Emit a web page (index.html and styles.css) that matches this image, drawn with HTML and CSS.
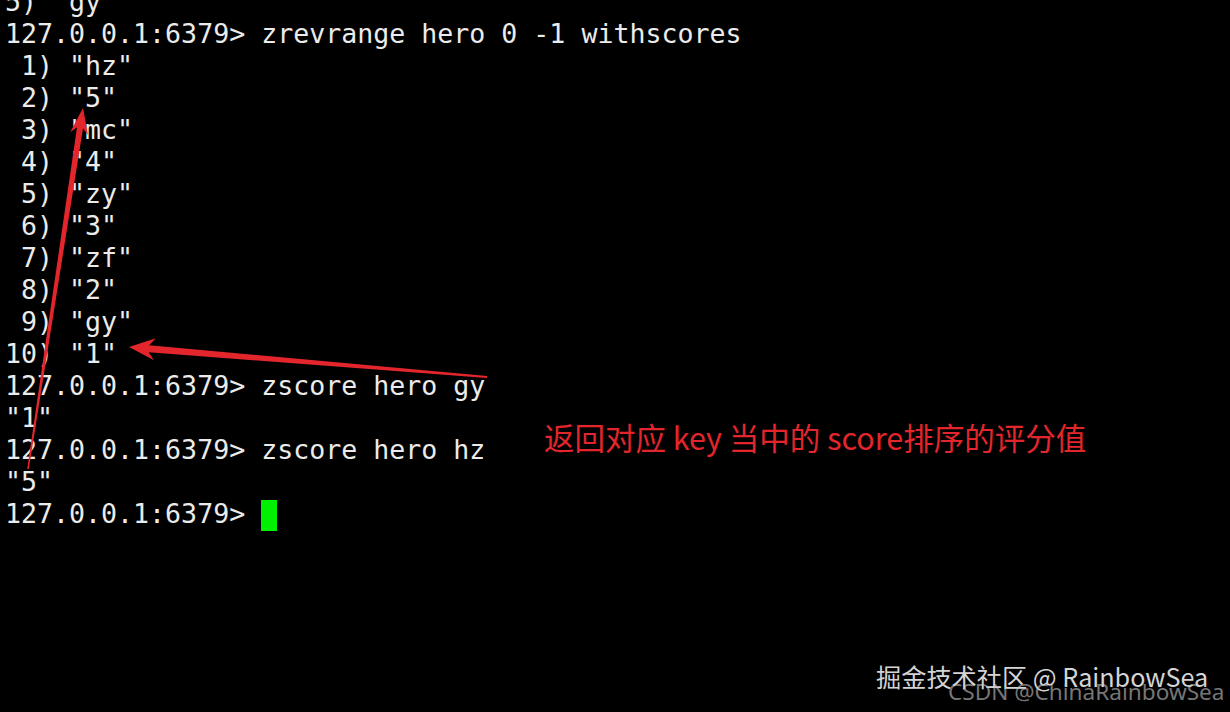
FILE: index.html
```html
<!DOCTYPE html>
<html lang="zh">
<head>
<meta charset="utf-8">
<link rel="stylesheet" href="styles.css">
</head>
<body>
<div class="screen">
<pre class="term">5) "gy"
127.0.0.1:6379&gt; zrevrange hero 0 -1 withscores
 1) "hz"
 2) "5"
 3) "mc"
 4) "4"
 5) "zy"
 6) "3"
 7) "zf"
 8) "2"
 9) "gy"
10) "1"
127.0.0.1:6379&gt; zscore hero gy
"1"
127.0.0.1:6379&gt; zscore hero hz
"5"
127.0.0.1:6379&gt; <span class="cursor"></span></pre>
<svg class="arrows" width="1230" height="712" viewBox="0 0 1230 712">
<polygon points="83,108 88,135.1 83,128.3 28.8,469.1 27.2,468.9 77,127.3 70.2,132.3" fill="#e3262c"/>
<polygon points="129,347 155.8,338.2 149.2,345.2 487.1,376 486.9,378 148.6,352.2 154,360.2" fill="#e3262c"/>
</svg>
<div class="note">返回对应 key 当中的 score排序的评分值</div>
<div class="wm1">掘金技术社区 @ RainbowSea</div>
<div class="wm2">CSDN @ChinaRainbowSea</div>
</div>
</body>
</html>
```
FILE: styles.css
```css
html, body {
  margin: 0;
  padding: 0;
  background: #000;
}
.screen {
  position: relative;
  width: 1230px;
  height: 712px;
  overflow: hidden;
  background: #000;
}
.term {
  margin: -14px 0 0 5px;
  font-family: "DejaVu Sans Mono", monospace;
  font-size: 26.6px;
  line-height: 32px;
  color: #ebebeb;
  white-space: pre;
}
.cursor {
  display: inline-block;
  width: 16px;
  height: 31px;
  background: #00f000;
  vertical-align: -8px;
}
.arrows {
  position: absolute;
  left: 0;
  top: 0;
}
.note {
  position: absolute;
  left: 544px;
  top: 417px;
  font-family: "Noto Sans CJK SC", "Noto Sans", sans-serif;
  font-size: 30.5px;
  line-height: 40px;
  color: #e3262c;
  white-space: nowrap;
}
.wm1 {
  position: absolute;
  left: 876px;
  top: 659px;
  font-family: "Noto Sans CJK SC", "Noto Sans", sans-serif;
  font-size: 25.2px;
  line-height: 34px;
  color: #d4d4d4;
  white-space: nowrap;
}
.wm2 {
  position: absolute;
  left: 948px;
  top: 677px;
  font-family: "Noto Sans", "Noto Sans CJK SC", sans-serif;
  font-size: 22.6px;
  line-height: 30px;
  color: rgba(200, 200, 200, 0.6);
  white-space: nowrap;
}
```
